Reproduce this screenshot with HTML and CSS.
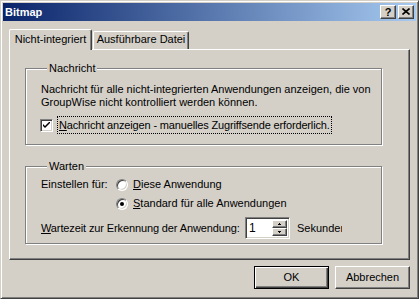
FILE: index.html
```html
<!DOCTYPE html>
<html lang="de">
<head>
  <meta charset="UTF-8" />
  <title>Bitmap</title>
  <link rel="stylesheet" href="styles.css">
</head>
<body>

  <div class="window">
    <div class="titlebar">
      <span class="title">Bitmap</span>
      <div class="caption-btns">
        <span class="cap-btn help">?</span>
        <span class="cap-btn close">
          <svg width="8" height="7" viewBox="0 0 8 7"><path d="M0.5 0.5 L7.5 6.5 M7.5 0.5 L0.5 6.5" stroke="#000" stroke-width="1.6" fill="none"/></svg>
        </span>
      </div>
    </div>

    <div class="dialog">
      <div class="tabs">
        <div class="tab active">Nicht-integriert</div>
        <div class="tab">Ausführbare Datei</div>
      </div>

      <div class="pane">
        <div class="group group-msg">
          <div class="group-title">Nachricht</div>
          <p class="msg">Nachricht für alle nicht-integrierten Anwendungen anzeigen, die von GroupWise nicht kontrolliert werden können.</p>
          <div class="check-row">
            <span class="checkbox">
              <svg width="7" height="7" viewBox="0 0 7 7"><path d="M0 2 L0 4 L2 6 L7 1 L7 -1 L2 4 Z" fill="#000"/></svg>
            </span>
            <span class="focus-label"><u>N</u>achricht anzeigen - manuelles Zugriffsende erforderlich.</span>
          </div>
        </div>

        <div class="group group-wait">
          <div class="group-title">Warten</div>
          <div class="row row-first">
            <span class="row-label">Einstellen für:</span>
            <span class="radio"></span>
            <span class="radio-text"><u>D</u>iese Anwendung</span>
          </div>
          <div class="row">
            <span class="row-label"></span>
            <span class="radio checked"></span>
            <span class="radio-text"><u>S</u>tandard für alle Anwendungen</span>
          </div>
          <div class="row row-spin">
            <span class="spin-label"><u>W</u>artezeit zur Erkennung der Anwendung:</span>
            <span class="spin">
              <span class="spin-value">1</span>
              <span class="spin-btns">
                <span class="spin-btn"><svg width="3" height="2" viewBox="0 0 3 2"><path d="M1 0 H2 V1 H3 V2 H0 V1 H1 Z" fill="#000"/></svg></span>
                <span class="spin-btn"><svg width="3" height="2" viewBox="0 0 3 2"><path d="M0 0 H3 V1 H2 V2 H1 V1 H0 Z" fill="#000"/></svg></span>
              </span>
            </span>
            <span class="unit">Sekunden</span>
          </div>
        </div>
      </div>

      <div class="buttons">
        <span class="btn default">OK</span>
        <span class="btn">Abbrechen</span>
      </div>
    </div>
  </div>

</body>
</html>
```

FILE: styles.css
```css
body {
  margin: 0;
  background: #d4d0c8;
  font-family: "Liberation Sans", Arial, sans-serif;
  font-size: 11px;
  line-height: 13px;
  color: #000;
}

.window {
  box-sizing: border-box;
  width: 419px;
  height: 299px;
  padding: 2px;
  background: #d4d0c8;
  border: 1px solid;
  border-color: #d4d0c8 #404040 #404040 #d4d0c8;
  box-shadow: inset 1px 1px #fff, inset -1px -1px #808080;
  display: flex;
  flex-direction: column;
}

/* title bar */
.titlebar {
  height: 18px;
  display: flex;
  align-items: center;
  justify-content: space-between;
  background: linear-gradient(to right, #0a246a, #a6caf0);
  padding-left: 2px;
}

.title {
  color: #fff;
  font-weight: bold;
  font-size: 11px;
}

.caption-btns {
  display: flex;
  gap: 2px;
  margin-right: 2px;
}

.cap-btn {
  box-sizing: border-box;
  width: 16px;
  height: 14px;
  background: #d4d0c8;
  border: 1px solid;
  border-color: #fff #404040 #404040 #fff;
  box-shadow: inset -1px -1px #808080;
  display: flex;
  align-items: center;
  justify-content: center;
  font-weight: bold;
  font-size: 11px;
  line-height: 11px;
}

.close svg {
  display: block;
  margin-top: -1px;
}

/* dialog body */
.dialog {
  flex: 1;
  padding: 8px 6px 0;
  display: flex;
  flex-direction: column;
}

.tabs {
  height: 20px;
  display: flex;
  align-items: flex-end;
}

.tab {
  box-sizing: border-box;
  height: 18px;
  width: 96px;
  text-align: center;
  line-height: 15px;
  border-top: 1px solid #fff;
  border-left: 1px solid #fff;
  border-right: 1px solid #404040;
  border-radius: 2px 2px 0 0;
  box-shadow: inset -1px 0 #808080;
  margin-left: 1px;
}

.tab.active {
  position: relative;
  z-index: 1;
  width: 83px;
  height: 21px;
  margin-left: 0;
  margin-bottom: -1px;
  background: #d4d0c8;
  line-height: 19px;
}

.pane {
  box-sizing: border-box;
  width: 401px;
  height: 211px;
  border: 1px solid;
  border-color: #fff #404040 #404040 #fff;
  box-shadow: inset -1px -1px #808080;
  padding-top: 18px;
}

/* group boxes */
.group {
  box-sizing: border-box;
  width: 357px;
  margin-left: 15px;
  border: 1px solid #808080;
  box-shadow: inset 1px 1px #fff, 1px 1px #fff;
  padding-left: 14px;
}

.group-title {
  display: table;
  margin: -7px 0 0 7px;
  padding: 0 2px;
  background: #d4d0c8;
}

.group-msg {
  padding-bottom: 10px;
}

.msg {
  margin: 8px 0 0 1px;
  width: 330px;
}

.check-row {
  margin-top: 7px;
  display: flex;
  align-items: center;
}

.checkbox {
  box-sizing: border-box;
  width: 13px;
  height: 13px;
  background: #fff;
  border: 1px solid;
  border-color: #808080 #fff #fff #808080;
  box-shadow: inset 1px 1px #404040, inset -1px -1px #d4d0c8;
  display: flex;
  align-items: center;
  justify-content: center;
}

.checkbox svg {
  display: block;
}

.focus-label {
  margin-left: 4px;
  padding: 2px 1px 1px;
  border: 1px dotted #000;
  letter-spacing: -0.15px;
}

.group-wait {
  margin-top: 21px;
  padding-bottom: 4px;
}

.row {
  height: 19px;
  display: flex;
  align-items: center;
  padding-left: 1px;
}

.row-first {
  margin-top: 2px;
}

.row-label {
  width: 75px;
}

.radio {
  position: relative;
  box-sizing: border-box;
  width: 12px;
  height: 12px;
  border-radius: 50%;
  background: #fff;
  border: 1px solid;
  border-color: #808080 #fff #fff #808080;
  box-shadow: inset 1px 1px #404040, inset -1px -1px #d4d0c8;
}

.radio.checked::after {
  content: "";
  position: absolute;
  left: 3px;
  top: 3px;
  width: 4px;
  height: 4px;
  border-radius: 50%;
  background: #000;
}

.radio-text {
  margin-left: 5px;
}

.row-spin {
  height: 22px;
  margin-top: 4px;
}

.spin-label {
  width: 204px;
  white-space: nowrap;
  letter-spacing: -0.12px;
}

.spin {
  box-sizing: border-box;
  width: 45px;
  height: 22px;
  background: #fff;
  border: 1px solid;
  border-color: #808080 #fff #fff #808080;
  box-shadow: inset 1px 1px #404040, inset -1px -1px #d4d0c8;
  display: flex;
  padding: 2px;
}

.spin-value {
  flex: 1;
  padding-left: 1px;
  line-height: 16px;
  font-size: 12px;
}

.spin-btns {
  display: flex;
  flex-direction: column;
  width: 15px;
}

.spin-btn {
  box-sizing: border-box;
  flex: 1;
  background: #d4d0c8;
  border: 1px solid;
  border-color: #fff #404040 #404040 #fff;
  box-shadow: inset -1px -1px #808080;
  display: flex;
  align-items: center;
  justify-content: center;
}

.spin-btn svg {
  display: block;
}

.unit {
  margin-left: 7px;
  width: 45px;
  overflow: hidden;
  white-space: nowrap;
}

/* dialog buttons */
.buttons {
  display: flex;
  justify-content: flex-end;
  gap: 6px;
  margin-top: 6px;
  width: 401px;
}

.btn {
  box-sizing: border-box;
  width: 75px;
  height: 23px;
  display: flex;
  align-items: center;
  justify-content: center;
  background: #d4d0c8;
  border: 1px solid;
  border-color: #fff #404040 #404040 #fff;
  box-shadow: inset -1px -1px #808080;
}

.btn.default {
  border: 1px solid #000;
  box-shadow: inset 1px 1px #fff, inset -1px -1px #404040, inset -2px -2px #808080;
}
```
